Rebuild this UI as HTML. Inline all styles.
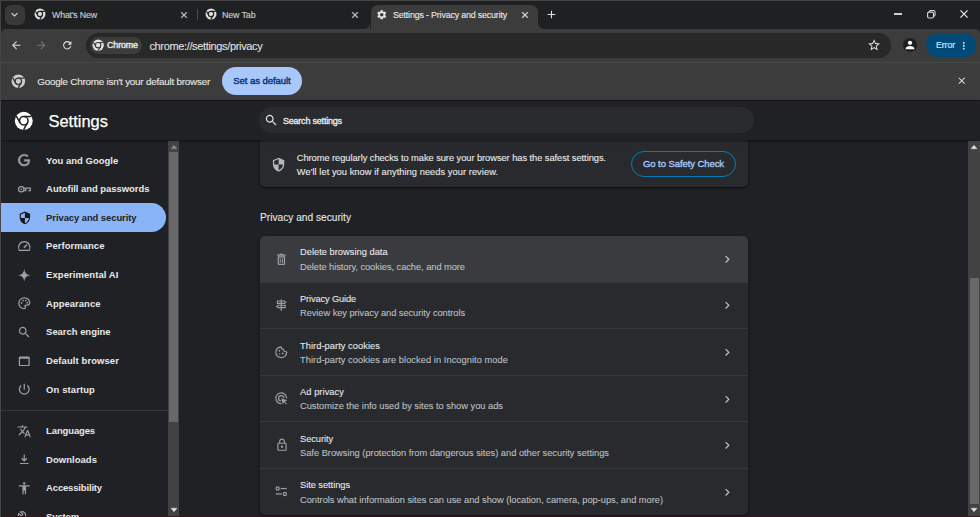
<!DOCTYPE html>
<html lang="en">
<head>
<meta charset="utf-8">
<title>Settings - Privacy and security</title>
<style>
html,body{margin:0;padding:0;background:#202124;}
body{width:980px;height:517px;overflow:hidden;font-family:"Liberation Sans",sans-serif;}
#w{position:relative;width:980px;height:517px;overflow:hidden;background:#202124;}
.a{position:absolute;}
.i{position:absolute;display:block;overflow:visible;}
.t{position:absolute;white-space:nowrap;line-height:16px;height:16px;font-family:"Liberation Sans",sans-serif;}
</style>
</head>
<body>
<div id="w">
<div class="a" style="left:0;top:0;width:980px;height:30px;background:#1f2021"></div>
<div class="a" style="left:0;top:0;width:980px;height:1px;background:#454545"></div>
<div class="a" style="left:4.5px;top:4.5px;width:20px;height:20px;border-radius:6px;background:#393939"></div>
<svg class="i" style="left:8.00px;top:8.00px;width:13px;height:13px" viewBox="0 0 24 24" fill="#e3e3e3"><path d="M16.59 8.59L12 13.17 7.41 8.59 6 10l6 6 6-6z"/></svg>
<svg class="i" style="left:34.20px;top:8.40px;width:12px;height:12px" viewBox="0 0 24 24"><circle cx="12" cy="12" r="11" fill="#dcdcdc"/><g stroke="#1f2021" stroke-width="2.3" fill="none"><circle cx="12" cy="12" r="5.2"/><path d="M12 6.800H21.500M7.500 14.600L2.800 6.400M16.500 14.600L11.800 22.800"/></g><circle cx="12" cy="12" r="3.600" fill="#dcdcdc"/></svg>
<svg class="i" style="left:179.20px;top:9.60px;width:10px;height:10px" viewBox="0 0 24 24" fill="#d2d2d2" stroke="#d2d2d2" stroke-width="0.9"><path d="M19 6.41L17.59 5 12 10.59 6.41 5 5 6.41 10.59 12 5 17.59 6.41 19 12 13.41 17.59 19 19 17.59 13.41 12z"/></svg>
<div class="a" style="left:197px;top:9px;width:1px;height:11px;background:#4a4a4a"></div>
<svg class="i" style="left:205.20px;top:8.40px;width:12px;height:12px" viewBox="0 0 24 24"><circle cx="12" cy="12" r="11" fill="#dcdcdc"/><g stroke="#1f2021" stroke-width="2.3" fill="none"><circle cx="12" cy="12" r="5.2"/><path d="M12 6.800H21.500M7.500 14.600L2.800 6.400M16.500 14.600L11.800 22.800"/></g><circle cx="12" cy="12" r="3.600" fill="#dcdcdc"/></svg>
<svg class="i" style="left:350.20px;top:9.60px;width:10px;height:10px" viewBox="0 0 24 24" fill="#d2d2d2" stroke="#d2d2d2" stroke-width="0.9"><path d="M19 6.41L17.59 5 12 10.59 6.41 5 5 6.41 10.59 12 5 17.59 6.41 19 12 13.41 17.59 19 19 17.59 13.41 12z"/></svg>
<div class="a" style="left:370.500px;top:4.500px;width:167px;height:25.500px;border-radius:7px 7px 0 0;background:#3c3c3c"></div>
<svg class="i" style="left:364px;top:23px;width:6px;height:6px" viewBox="0 0 6 6"><path d="M6 0V6H0A6 6 0 0 0 6 0z" fill="#3c3c3c"/></svg>
<svg class="i" style="left:538px;top:23px;width:6px;height:6px" viewBox="0 0 6 6"><path d="M0 0V6H6A6 6 0 0 1 0 0z" fill="#3c3c3c"/></svg>
<svg class="i" style="left:375.75px;top:8.75px;width:11.5px;height:11.5px" viewBox="0 0 24 24" fill="#e3e3e3"><path d="M19.14 12.94c.04-.3.06-.61.06-.94 0-.32-.02-.64-.07-.94l2.03-1.58c.18-.14.23-.41.12-.61l-1.92-3.32c-.12-.22-.37-.29-.59-.22l-2.39.96c-.5-.38-1.03-.7-1.62-.94l-.36-2.54c-.04-.24-.24-.41-.48-.41h-3.84c-.24 0-.43.17-.47.41l-.36 2.54c-.59.24-1.13.57-1.62.94l-2.39-.96c-.22-.08-.47 0-.59.22L2.74 8.87c-.12.21-.08.47.12.61l2.03 1.58c-.05.3-.09.63-.09.94s.02.64.07.94l-2.03 1.58c-.18.14-.23.41-.12.61l1.92 3.32c.12.22.37.29.59.22l2.39-.96c.5.38 1.03.7 1.62.94l.36 2.54c.05.24.24.41.48.41h3.84c.24 0 .44-.17.47-.41l.36-2.54c.59-.24 1.13-.56 1.62-.94l2.39.96c.22.08.47 0 .59-.22l1.92-3.32c.12-.22.07-.47-.12-.61l-2.01-1.58zM12 15.6c-1.98 0-3.6-1.62-3.6-3.6s1.62-3.6 3.6-3.6 3.6 1.62 3.6 3.6-1.62 3.6-3.6 3.6z"/></svg>
<svg class="i" style="left:520.20px;top:9.60px;width:10px;height:10px" viewBox="0 0 24 24" fill="#e8e8e8" stroke="#e8e8e8" stroke-width="0.9"><path d="M19 6.41L17.59 5 12 10.59 6.41 5 5 6.41 10.59 12 5 17.59 6.41 19 12 13.41 17.59 19 19 17.59 13.41 12z"/></svg>
<svg class="i" style="left:544.50px;top:8.00px;width:13px;height:13px" viewBox="0 0 24 24" fill="#e3e3e3"><path d="M19 13h-6v6h-2v-6H5v-2h6V5h2v6h6v2z"/></svg>
<div class="a" style="left:894px;top:13.400px;width:7.500px;height:1.200px;background:#cfcfcf"></div>
<svg class="i" style="left:926.50px;top:10.10px;width:8.6px;height:8.6px" viewBox="0 0 9 9"><g fill="none" stroke="#d8d8d8" stroke-width="1.150"><rect x="0.6" y="2.200" width="6.200" height="6.200" rx="1.500"/><path d="M2.400 2V1.900A1.400 1.400 0 0 1 3.800 .6H7A1.400 1.400 0 0 1 8.400 2V5.200A1.400 1.400 0 0 1 7.100 6.600"/></g></svg>
<svg class="i" style="left:959.70px;top:10.45px;width:8px;height:8px" viewBox="0 0 9 9"><path d="M.5 .5L8.500 8.500M8.500 .5L.5 8.500" stroke="#f0f0f0" stroke-width="1.250" fill="none"/></svg>
<div class="a" style="left:1px;top:29px;width:979px;height:32px;background:#3c3c3c;border-radius:5px 5px 0 0"></div>
<svg class="i" style="left:9.75px;top:38.75px;width:12.5px;height:12.5px" viewBox="0 0 24 24" fill="#dedede"><path d="M20 11H7.83l5.59-5.59L12 4l-8 8 8 8 1.41-1.41L7.83 13H20v-2z"/></svg>
<svg class="i" style="left:35.25px;top:38.75px;width:12.5px;height:12.5px" viewBox="0 0 24 24" fill="#757575"><path d="M12 4l-1.41 1.41L16.17 11H4v2h12.17l-5.58 5.59L12 20l8-8z"/></svg>
<svg class="i" style="left:60.75px;top:38.75px;width:12.5px;height:12.5px" viewBox="0 0 24 24" fill="#dedede"><path d="M17.65 6.35C16.2 4.9 14.21 4 12 4c-4.42 0-7.99 3.58-7.99 8s3.57 8 7.99 8c3.73 0 6.84-2.55 7.73-6h-2.08c-.82 2.33-3.04 4-5.65 4-3.31 0-6-2.69-6-6s2.69-6 6-6c1.66 0 3.14.69 4.22 1.78L13 11h7V4l-2.35 2.35z"/></svg>
<div class="a" style="left:85.700px;top:33px;width:805px;height:24.500px;border-radius:12.250px;background:#282828"></div>
<div class="a" style="left:90.200px;top:36.600px;width:52px;height:17.400px;border-radius:8.700px;background:#3c3c3c"></div>
<svg class="i" style="left:92.05px;top:39.25px;width:12.3px;height:12.3px" viewBox="0 0 24 24"><circle cx="12" cy="12" r="11" fill="#e3e3e3"/><g stroke="#3c3c3c" stroke-width="2.3" fill="none"><circle cx="12" cy="12" r="5.2"/><path d="M12 6.800H21.500M7.500 14.600L2.800 6.400M16.500 14.600L11.800 22.800"/></g><circle cx="12" cy="12" r="3.600" fill="#e3e3e3"/></svg>
<svg class="i" style="left:866.70px;top:38.10px;width:14.2px;height:14.2px" viewBox="0 0 24 24" fill="#e3e3e3"><path d="M22 9.24l-7.19-.62L12 2 9.19 8.63 2 9.24l5.46 4.73L5.82 21 12 17.27 18.18 21l-1.63-7.03L22 9.24zM12 15.4l-3.76 2.27 1-4.28-3.32-2.88 4.38-.38L12 6.1l1.71 4.04 4.38.38-3.32 2.88 1 4.28L12 15.4z"/></svg>
<svg class="i" style="left:902.80px;top:38.10px;width:14px;height:14px" viewBox="0 0 24 24"><circle cx="12" cy="12" r="12" fill="#1f1f1f"/><circle cx="12" cy="8.300" r="3.700" fill="#ffffff"/><path d="M4.500 18.200C4.500 15 8.500 13.500 12 13.500S19.500 15 19.500 18.200V19.300H4.500z" fill="#ffffff"/></svg>
<div class="a" style="left:925.600px;top:32.800px;width:50px;height:24.400px;border-radius:12.200px;background:#004a77"></div>
<svg class="i" style="left:957.75px;top:39.55px;width:11.5px;height:11.5px" viewBox="0 0 24 24" fill="#c2e7ff"><path d="M12 8c1.1 0 2-.9 2-2s-.9-2-2-2-2 .9-2 2 .9 2 2 2zm0 2c-1.1 0-2 .9-2 2s.9 2 2 2 2-.9 2-2-.9-2-2-2zm0 6c-1.1 0-2 .9-2 2s.9 2 2 2 2-.9 2-2-.9-2-2-2z"/></svg>
<div class="a" style="left:1px;top:60px;width:979px;height:40px;background:#3c3c3c"></div>
<div class="a" style="left:1px;top:61.700px;width:979px;height:1.200px;background:#474848"></div>
<div class="a" style="left:1px;top:100px;width:979px;height:1px;background:#17181a"></div>
<svg class="i" style="left:11.45px;top:73.85px;width:14.7px;height:14.7px" viewBox="0 0 24 24"><circle cx="12" cy="12" r="11" fill="#cdcdcd"/><g stroke="#3c3c3c" stroke-width="2.3" fill="none"><circle cx="12" cy="12" r="5.2"/><path d="M12 6.800H21.500M7.500 14.600L2.800 6.400M16.500 14.600L11.800 22.800"/></g><circle cx="12" cy="12" r="3.600" fill="#cdcdcd"/></svg>
<div class="a" style="left:222px;top:67px;width:80px;height:28px;border-radius:14px;background:#a8c7fa"></div>
<svg class="i" style="left:955.85px;top:75.45px;width:11.5px;height:11.5px" viewBox="0 0 24 24" fill="#e3e3e3"><path d="M19 6.41L17.59 5 12 10.59 6.41 5 5 6.41 10.59 12 5 17.59 6.41 19 12 13.41 17.59 19 19 17.59 13.41 12z"/></svg>
<div class="a" style="left:259.500px;top:130px;width:488.300px;height:57.300px;border-radius:5px;background:#292a2d;box-shadow:0 1px 2px rgba(0,0,0,.35),0 1px 3px 1px rgba(0,0,0,.18)"></div>
<svg class="i" style="left:270.70px;top:156.60px;width:15.2px;height:15.2px" viewBox="0 0 24 24" fill="#b4b8bd"><path d="M12 1L3 5v6c0 5.550 3.840 10.740 9 12 5.160-1.260 9-6.450 9-12V5l-9-4zm0 10.990h7c-.530 4.120-3.280 7.790-7 8.940V12H5V6.300l7-3.110v8.800z"/></svg>
<div class="a" style="left:631px;top:151px;width:103px;height:24.300px;border-radius:13.500px;border:1.150px solid #047db7"></div>
<div class="a" style="left:259.600px;top:235.500px;width:488.200px;height:279.200px;border-radius:5px;background:#292a2d;box-shadow:0 1px 2px rgba(0,0,0,.35),0 1px 3px 1px rgba(0,0,0,.18)"></div>
<div class="a" style="left:259.600px;top:235.500px;width:488.200px;height:47px;border-radius:5px 5px 0 0;background:#3a3b3e"></div>
<div class="a" style="left:259.600px;top:281.75px;width:488.200px;height:1px;background:#37383b"></div>
<div class="a" style="left:259.600px;top:328.30px;width:488.200px;height:1px;background:#37383b"></div>
<div class="a" style="left:259.600px;top:374.85px;width:488.200px;height:1px;background:#37383b"></div>
<div class="a" style="left:259.600px;top:421.40px;width:488.200px;height:1px;background:#37383b"></div>
<div class="a" style="left:259.600px;top:467.95px;width:488.200px;height:1px;background:#37383b"></div>
<svg class="i" style="left:720.25px;top:251.85px;width:14.5px;height:14.5px" viewBox="0 0 24 24" fill="#bfc3c8"><path d="M10 6L8.59 7.41 13.17 12l-4.58 4.59L10 18l6-6z"/></svg>
<svg class="i" style="left:720.25px;top:298.40px;width:14.5px;height:14.5px" viewBox="0 0 24 24" fill="#bfc3c8"><path d="M10 6L8.59 7.41 13.17 12l-4.58 4.59L10 18l6-6z"/></svg>
<svg class="i" style="left:720.25px;top:344.95px;width:14.5px;height:14.5px" viewBox="0 0 24 24" fill="#bfc3c8"><path d="M10 6L8.59 7.41 13.17 12l-4.58 4.59L10 18l6-6z"/></svg>
<svg class="i" style="left:720.25px;top:391.50px;width:14.5px;height:14.5px" viewBox="0 0 24 24" fill="#bfc3c8"><path d="M10 6L8.59 7.41 13.17 12l-4.58 4.59L10 18l6-6z"/></svg>
<svg class="i" style="left:720.25px;top:438.05px;width:14.5px;height:14.5px" viewBox="0 0 24 24" fill="#bfc3c8"><path d="M10 6L8.59 7.41 13.17 12l-4.58 4.59L10 18l6-6z"/></svg>
<svg class="i" style="left:720.25px;top:484.60px;width:14.5px;height:14.5px" viewBox="0 0 24 24" fill="#bfc3c8"><path d="M10 6L8.59 7.41 13.17 12l-4.58 4.59L10 18l6-6z"/></svg>
<svg class="i" style="left:274.10px;top:251.50px;width:14.8px;height:14.8px" viewBox="0 0 24 24" fill="#9aa0a6"><path d="M16 9v10H8V9h8m-1.500-6h-5l-1 1H5v2h14V4h-3.500l-1-1zM18 7H6v12c0 1.100.9 2 2 2h8c1.100 0 2-.9 2-2V7zM9.500 10.500h1.500v7h-1.500zM13 10.500h1.500v7H13z"/></svg>
<svg class="i" style="left:274.25px;top:298.20px;width:14.5px;height:14.5px" viewBox="0 0 24 24"><g fill="none" stroke="#9aa0a6" stroke-width="1.900"><path d="M12 2.500V21.500"/><path d="M5.500 5H17.300L19.500 7 17.300 9H5.500z"/><path d="M18.500 12H6.700L4.500 14 6.700 16H18.500z"/></g></svg>
<svg class="i" style="left:274.25px;top:344.75px;width:14.5px;height:14.5px" viewBox="0 0 24 24"><path d="M21 12.300A9 9 0 1 1 11.700 3C11.700 5.500 13.200 7.200 15.700 7.200 15.700 9.700 17.500 11.300 20 11.200 20.400 11.500 21 11.800 21 12.300z" fill="none" stroke="#9aa0a6" stroke-width="2" stroke-linejoin="round"/><circle cx="9" cy="9.500" r="1.500" fill="#9aa0a6"/><circle cx="14.500" cy="14" r="1.500" fill="#9aa0a6"/><circle cx="9.500" cy="15" r="1.200" fill="#9aa0a6"/></svg>
<svg class="i" style="left:274.25px;top:391.30px;width:14.5px;height:14.5px" viewBox="0 0 24 24"><path d="M12.500 21A9 9 0 1 1 21 12.500" fill="none" stroke="#9aa0a6" stroke-width="2"/><path d="M11.500 16.500A4.500 4.500 0 1 1 16.500 11.500" fill="none" stroke="#9aa0a6" stroke-width="2"/><path d="M12 12L22 15.500 18 17.500 21.500 21.500 20 22.500 17 18.500 14.500 21.500z" fill="#9aa0a6"/></svg>
<svg class="i" style="left:274.50px;top:437.90px;width:14px;height:14px" viewBox="0 0 24 24" fill="#9aa0a6"><path d="M18 8h-1V6c0-2.760-2.240-5-5-5S7 3.240 7 6v2H6c-1.100 0-2 .9-2 2v10c0 1.100.9 2 2 2h12c1.100 0 2-.9 2-2V10c0-1.100-.9-2-2-2zM9 6c0-1.660 1.340-3 3-3s3 1.340 3 3v2H9V6zm9 14H6V10h12v10zm-6-3c1.100 0 2-.9 2-2s-.9-2-2-2-2 .9-2 2 .9 2 2 2z"/></svg>
<svg class="i" style="left:274.25px;top:484.40px;width:14.5px;height:14.5px" viewBox="0 0 24 24"><g fill="none" stroke="#9aa0a6" stroke-width="2"><circle cx="6" cy="7.500" r="2.600"/><path d="M11 7.500H21"/><circle cx="18" cy="16.500" r="2.600"/><path d="M3 16.500H13"/></g></svg>
<div class="a" style="left:1px;top:101px;width:979px;height:39px;background:#202124;box-shadow:0 1px 3px rgba(0,0,0,.5)"></div>
<svg class="i" style="left:14.00px;top:110.60px;width:19.6px;height:19.6px" viewBox="0 0 24 24"><circle cx="12" cy="12" r="11" fill="#ffffff"/><g stroke="#202124" stroke-width="1.9" fill="none"><circle cx="12" cy="12" r="5.2"/><path d="M12 6.800H21.500M7.500 14.600L2.800 6.400M16.500 14.600L11.800 22.800"/></g><circle cx="12" cy="12" r="3.600" fill="#ffffff"/></svg>
<div class="a" style="left:259.300px;top:107px;width:495px;height:25.700px;border-radius:12.850px;background:#2a2b2e"></div>
<svg class="i" style="left:264.35px;top:113.05px;width:14.5px;height:14.5px" viewBox="0 0 24 24" fill="#dfe1e5"><path d="M15.5 14h-.79l-.28-.27C15.41 12.59 16 11.11 16 9.5 16 5.91 13.09 3 9.5 3S3 5.91 3 9.5 5.91 16 9.5 16c1.61 0 3.09-.59 4.23-1.57l.27.28v.79l5 4.99L20.49 19l-4.99-5zm-6 0C7.01 14 5 11.99 5 9.5S7.01 5 9.5 5 14 7.01 14 9.5 11.99 14 9.5 14z"/></svg>
<div class="a" style="left:1px;top:203px;width:165px;height:29px;border-radius:0 14.500px 14.500px 0;background:#8ab4f8"></div>
<svg class="i" style="left:17.45px;top:153.25px;width:14.3px;height:14.3px" viewBox="0 0 24 24" fill="#9aa0a6" stroke="#9aa0a6" stroke-width="0.7"><path d="M21.350 11.100h-9.170v2.730h6.510c-.330 3.810-3.500 5.440-6.500 5.440C8.360 19.270 5 16.250 5 12c0-4.100 3.200-7.270 7.200-7.270 3.090 0 4.900 1.970 4.900 1.970L19 4.720S16.560 2 12.100 2C6.420 2 2.030 6.800 2.030 12c0 5.050 4.130 10 10.220 10 5.350 0 9.250-3.670 9.250-9.090 0-1.150-.150-1.810-.150-1.810z"/></svg>
<svg class="i" style="left:17.35px;top:181.80px;width:14.5px;height:14.5px" viewBox="0 0 24 24"><g fill="none" stroke="#9aa0a6" stroke-width="2"><circle cx="7" cy="12" r="4.500"/><path d="M11.500 10H22V14.500H18.500M14.500 10V14.500H11"/></g><circle cx="7" cy="12" r="1.400" fill="#9aa0a6"/></svg>
<svg class="i" style="left:17.60px;top:210.90px;width:13.8px;height:13.8px" viewBox="0 0 24 24" fill="#17181b"><path d="M12 1L3 5v6c0 5.550 3.840 10.740 9 12 5.160-1.260 9-6.450 9-12V5l-9-4zm0 10.990h7c-.530 4.120-3.280 7.790-7 8.940V12H5V6.300l7-3.110v8.800z"/></svg>
<svg class="i" style="left:17.35px;top:239.10px;width:14.5px;height:14.5px" viewBox="0 0 24 24"><g fill="none" stroke="#9aa0a6" stroke-width="2"><path d="M3.770 18.750A9.500 9.500 0 1 1 20.230 18.750z" stroke-linejoin="round"/><path d="M11.500 14.500L16.500 9" stroke-width="2.400"/></g></svg>
<svg class="i" style="left:17.35px;top:267.75px;width:14.5px;height:14.5px" viewBox="0 0 24 24" fill="#9aa0a6"><path d="M12 1.500C12.600 8 16 11.400 22.500 12 16 12.600 12.600 16 12 22.500 11.400 16 8 12.600 1.500 12 8 11.400 11.400 8 12 1.500z"/></svg>
<svg class="i" style="left:17.35px;top:296.40px;width:14.5px;height:14.5px" viewBox="0 0 24 24"><path d="M12 3A9 9 0 1 0 12 21C13.200 21 14 20.100 14 19 14 17.800 13 17.500 13 16.500 13 15.500 13.800 15 15 15H17C19.500 15 21 13.300 21 11 21 6.500 17 3 12 3z" fill="none" stroke="#9aa0a6" stroke-width="2"/><circle cx="7.500" cy="11.500" r="1.400" fill="#9aa0a6"/><circle cx="10" cy="7.500" r="1.400" fill="#9aa0a6"/><circle cx="14.500" cy="7.500" r="1.400" fill="#9aa0a6"/><circle cx="17" cy="11" r="1.400" fill="#9aa0a6"/></svg>
<svg class="i" style="left:17.35px;top:325.05px;width:14.5px;height:14.5px" viewBox="0 0 24 24" fill="#9aa0a6"><path d="M15.5 14h-.79l-.28-.27C15.41 12.59 16 11.11 16 9.5 16 5.91 13.09 3 9.5 3S3 5.91 3 9.5 5.91 16 9.5 16c1.61 0 3.09-.59 4.23-1.57l.27.28v.79l5 4.99L20.49 19l-4.99-5zm-6 0C7.01 14 5 11.99 5 9.5S7.01 5 9.5 5 14 7.01 14 9.5 11.99 14 9.5 14z"/></svg>
<svg class="i" style="left:17.35px;top:353.70px;width:14.5px;height:14.5px" viewBox="0 0 24 24" fill="#9aa0a6"><path d="M19 4H5c-1.110 0-2 .9-2 2v12c0 1.100.890 2 2 2h14c1.100 0 2-.9 2-2V6c0-1.100-.890-2-2-2zm0 14H5V8h14v10z"/></svg>
<svg class="i" style="left:17.35px;top:382.35px;width:14.5px;height:14.5px" viewBox="0 0 24 24" fill="#9aa0a6"><path d="M13 3h-2v10h2V3zm4.830 2.170l-1.420 1.420C17.990 7.860 19 9.810 19 12c0 3.870-3.130 7-7 7s-7-3.130-7-7c0-2.190 1.010-4.140 2.580-5.420L6.170 5.170C4.230 6.820 3 9.260 3 12c0 4.970 4.030 9 9 9s9-4.030 9-9c0-2.740-1.230-5.180-3.170-6.830z"/></svg>
<div class="a" style="left:1px;top:410px;width:167px;height:1px;background:#36373a"></div>
<svg class="i" style="left:17.35px;top:423.55px;width:14.5px;height:14.5px" viewBox="0 0 24 24" fill="#9aa0a6"><path d="M12.870 15.070l-2.540-2.510.030-.030c1.740-1.940 2.980-4.170 3.710-6.530H17V4h-7V2H8v2H1v1.990h11.170C11.500 7.920 10.440 9.750 9 11.350 8.070 10.320 7.300 9.190 6.690 8h-2c.730 1.630 1.730 3.170 2.980 4.560l-5.090 5.020L4 19l5-5 3.110 3.110.760-2.040zM18.500 10h-2L12 22h2l1.120-3h4.750L21 22h2l-4.500-12zm-2.620 7l1.620-4.330L19.120 17h-3.240z"/></svg>
<svg class="i" style="left:17.35px;top:452.20px;width:14.5px;height:14.5px" viewBox="0 0 24 24" fill="#9aa0a6"><path d="M5 18h14v2H5z M11 4h2v8.170l2.590-2.580L17 11l-5 5-5-5 1.410-1.410L11 12.170z"/></svg>
<svg class="i" style="left:17.35px;top:480.85px;width:14.5px;height:14.5px" viewBox="0 0 24 24" fill="#9aa0a6"><path d="M12 2c1.100 0 2 .9 2 2s-.9 2-2 2-2-.9-2-2 .9-2 2-2zm9 7h-6v13h-2v-6h-2v6H9V9H3V7h18v2z"/></svg>
<svg class="i" style="left:18.10px;top:511.45px;width:13px;height:13px" viewBox="0 0 24 24" fill="none" stroke="#9aa0a6" stroke-width="2.200"><path d="M22.700 19l-9.100-9.100c.9-2.300.4-5-1.500-6.900-2-2-5-2.400-7.400-1.300L9 6 6 9 1.600 4.700C.4 7.100.9 10.100 2.900 12.100c1.900 1.900 4.600 2.400 6.900 1.500l9.100 9.100c.4.400 1 .4 1.400 0l2.300-2.300c.5-.4.500-1.100.1-1.400z"/></svg>
<div class="a" style="left:168px;top:140.500px;width:11px;height:377px;background:#424242"></div>
<div class="a" style="left:169.300px;top:152px;width:9px;height:269.500px;background:#686868"></div>
<svg class="i" style="left:170.60px;top:144.70px;width:6px;height:4px" viewBox="0 0 6 4"><path d="M3 0.2L6 3.800H0z" fill="#8a8a8a" stroke="#8a8a8a" stroke-width="0.4" stroke-linejoin="round"/></svg>
<svg class="i" style="left:170.60px;top:507.90px;width:6px;height:4px" viewBox="0 0 6 4"><path d="M0 0.200H6L3 3.800z" fill="#e6e6e6" stroke="#e6e6e6" stroke-width="0.4" stroke-linejoin="round"/></svg>
<div class="a" style="left:968.200px;top:140.500px;width:12px;height:377px;background:#424242"></div>
<div class="a" style="left:969.600px;top:278px;width:9.300px;height:225.600px;background:#686868"></div>
<svg class="i" style="left:971.05px;top:144.90px;width:6px;height:4px" viewBox="0 0 6 4"><path d="M3 0.2L6 3.800H0z" fill="#e6e6e6" stroke="#e6e6e6" stroke-width="0.4" stroke-linejoin="round"/></svg>
<svg class="i" style="left:971.05px;top:507.90px;width:6px;height:4px" viewBox="0 0 6 4"><path d="M0 0.200H6L3 3.800z" fill="#e6e6e6" stroke="#e6e6e6" stroke-width="0.4" stroke-linejoin="round"/></svg>
<div class="a" style="left:0;top:516.200px;width:980px;height:1px;background:#34171a"></div>
<div class="a" style="left:0;top:0;width:1px;height:517px;background:#454545"></div>
<span class="t" style="left:52px;top:7.30px;font-size:8.90px;font-weight:400;color:#cfcfcf;letter-spacing:-0.208px;-webkit-text-stroke:0.12px #cfcfcf;">What&#39;s New</span>
<span class="t" style="left:222px;top:7.30px;font-size:8.90px;font-weight:400;color:#cfcfcf;letter-spacing:-0.125px;-webkit-text-stroke:0.12px #cfcfcf;">New Tab</span>
<span class="t" style="left:393px;top:7.30px;font-size:8.90px;font-weight:400;color:#e8e8e8;letter-spacing:-0.173px;-webkit-text-stroke:0.12px #e8e8e8;">Settings - Privacy and security</span>
<span class="t" style="left:107.1px;top:37.40px;font-size:8.90px;font-weight:400;color:#e3e3e3;letter-spacing:-0.146px;-webkit-text-stroke:0.45px #e3e3e3;">Chrome</span>
<span class="t" style="left:149.4px;top:37.70px;font-size:11.00px;font-weight:400;color:#e3e3e3;letter-spacing:-0.346px;-webkit-text-stroke:0.08px #e3e3e3;">chrome://settings/privacy</span>
<span class="t" style="left:936px;top:37.40px;font-size:8.80px;font-weight:400;color:#c2e7ff;letter-spacing:-0.113px;-webkit-text-stroke:0.2px #c2e7ff;">Error</span>
<span class="t" style="left:37.3px;top:73.50px;font-size:9.85px;font-weight:400;color:#e8e8e8;letter-spacing:-0.216px;-webkit-text-stroke:0.1px #e8e8e8;">Google Chrome isn&#39;t your default browser</span>
<span class="t" style="left:233.3px;top:73.40px;font-size:9.60px;font-weight:400;color:#062e6f;letter-spacing:-0.091px;-webkit-text-stroke:0.35px #062e6f;">Set as default</span>
<span class="t" style="left:48.5px;top:112.60px;font-size:16.46px;font-weight:400;color:#ffffff;-webkit-text-stroke:0.25px #ffffff;">Settings</span>
<span class="t" style="left:282.9px;top:112.50px;font-size:9.00px;font-weight:400;color:#e8eaed;letter-spacing:-0.203px;-webkit-text-stroke:0.35px #e8eaed;">Search settings</span>
<span class="t" style="left:46.1px;top:152.50px;font-size:9.45px;font-weight:700;color:#e8eaed;letter-spacing:0.039px;">You and Google</span>
<span class="t" style="left:46.1px;top:181.15px;font-size:9.45px;font-weight:700;color:#e8eaed;letter-spacing:-0.019px;">Autofill and passwords</span>
<span class="t" style="left:46.1px;top:209.80px;font-size:9.45px;font-weight:700;color:#202124;letter-spacing:-0.071px;">Privacy and security</span>
<span class="t" style="left:46.1px;top:238.45px;font-size:9.45px;font-weight:700;color:#e8eaed;letter-spacing:0.063px;">Performance</span>
<span class="t" style="left:46.1px;top:267.10px;font-size:9.45px;font-weight:700;color:#e8eaed;letter-spacing:0.094px;">Experimental AI</span>
<span class="t" style="left:46.1px;top:295.75px;font-size:9.45px;font-weight:700;color:#e8eaed;letter-spacing:0.037px;">Appearance</span>
<span class="t" style="left:46.1px;top:324.40px;font-size:9.45px;font-weight:700;color:#e8eaed;letter-spacing:-0.009px;">Search engine</span>
<span class="t" style="left:46.1px;top:353.05px;font-size:9.45px;font-weight:700;color:#e8eaed;letter-spacing:0.105px;">Default browser</span>
<span class="t" style="left:46.1px;top:381.70px;font-size:9.45px;font-weight:700;color:#e8eaed;letter-spacing:0.118px;">On startup</span>
<span class="t" style="left:46.1px;top:422.90px;font-size:9.45px;font-weight:700;color:#e8eaed;letter-spacing:-0.103px;">Languages</span>
<span class="t" style="left:46.1px;top:451.55px;font-size:9.45px;font-weight:700;color:#e8eaed;letter-spacing:0.062px;">Downloads</span>
<span class="t" style="left:46.1px;top:480.20px;font-size:9.45px;font-weight:700;color:#e8eaed;letter-spacing:-0.140px;">Accessibility</span>
<span class="t" style="left:46.1px;top:508.85px;font-size:9.45px;font-weight:700;color:#e8eaed;letter-spacing:-0.113px;">System</span>
<span class="t" style="left:296.8px;top:149.65px;font-size:9.30px;font-weight:400;color:#e8eaed;letter-spacing:-0.053px;-webkit-text-stroke:0.1px #e8eaed;">Chrome regularly checks to make sure your browser has the safest settings.</span>
<span class="t" style="left:296.8px;top:163.60px;font-size:9.30px;font-weight:400;color:#e8eaed;letter-spacing:0.045px;-webkit-text-stroke:0.1px #e8eaed;">We&#39;ll let you know if anything needs your review.</span>
<span class="t" style="left:643px;top:156.40px;font-size:9.50px;font-weight:400;color:#a8c7fa;letter-spacing:-0.076px;-webkit-text-stroke:0.35px #a8c7fa;">Go to Safety Check</span>
<span class="t" style="left:260.1px;top:209.65px;font-size:10.16px;font-weight:400;color:#e8eaed;-webkit-text-stroke:0.08px #e8eaed;">Privacy and security</span>
<span class="t" style="left:300px;top:244.40px;font-size:9.30px;font-weight:400;color:#e8eaed;letter-spacing:0.013px;-webkit-text-stroke:0.08px #e8eaed;">Delete browsing data</span>
<span class="t" style="left:300px;top:258.80px;font-size:9.30px;font-weight:400;color:#bdc1c6;letter-spacing:-0.057px;-webkit-text-stroke:0.08px #bdc1c6;">Delete history, cookies, cache, and more</span>
<span class="t" style="left:300px;top:290.95px;font-size:9.30px;font-weight:400;color:#e8eaed;letter-spacing:-0.144px;-webkit-text-stroke:0.08px #e8eaed;">Privacy Guide</span>
<span class="t" style="left:300px;top:305.35px;font-size:9.30px;font-weight:400;color:#bdc1c6;letter-spacing:-0.061px;-webkit-text-stroke:0.08px #bdc1c6;">Review key privacy and security controls</span>
<span class="t" style="left:300px;top:337.50px;font-size:9.30px;font-weight:400;color:#e8eaed;letter-spacing:0.049px;-webkit-text-stroke:0.08px #e8eaed;">Third-party cookies</span>
<span class="t" style="left:300px;top:351.90px;font-size:9.30px;font-weight:400;color:#bdc1c6;letter-spacing:0.048px;-webkit-text-stroke:0.08px #bdc1c6;">Third-party cookies are blocked in Incognito mode</span>
<span class="t" style="left:300px;top:384.05px;font-size:9.30px;font-weight:400;color:#e8eaed;letter-spacing:0.059px;-webkit-text-stroke:0.08px #e8eaed;">Ad privacy</span>
<span class="t" style="left:300px;top:398.45px;font-size:9.30px;font-weight:400;color:#bdc1c6;letter-spacing:-0.013px;-webkit-text-stroke:0.08px #bdc1c6;">Customize the info used by sites to show you ads</span>
<span class="t" style="left:300px;top:430.60px;font-size:9.30px;font-weight:400;color:#e8eaed;letter-spacing:-0.074px;-webkit-text-stroke:0.08px #e8eaed;">Security</span>
<span class="t" style="left:300px;top:445.00px;font-size:9.30px;font-weight:400;color:#bdc1c6;letter-spacing:-0.014px;-webkit-text-stroke:0.08px #bdc1c6;">Safe Browsing (protection from dangerous sites) and other security settings</span>
<span class="t" style="left:300px;top:477.15px;font-size:9.30px;font-weight:400;color:#e8eaed;letter-spacing:-0.050px;-webkit-text-stroke:0.08px #e8eaed;">Site settings</span>
<span class="t" style="left:300px;top:491.55px;font-size:9.30px;font-weight:400;color:#bdc1c6;letter-spacing:-0.021px;-webkit-text-stroke:0.08px #bdc1c6;">Controls what information sites can use and show (location, camera, pop-ups, and more)</span>
</div>
</body>
</html>
